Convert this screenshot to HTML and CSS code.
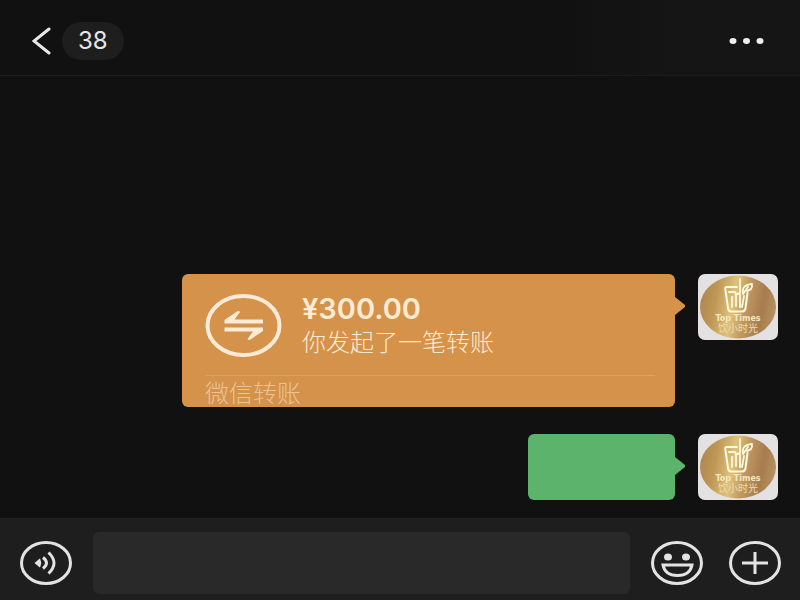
FILE: index.html
```html
<!DOCTYPE html>
<html lang="zh-CN">
<head>
<meta charset="utf-8">
<meta name="viewport" content="width=device-width, initial-scale=1">
<title>微信</title>
<link rel="stylesheet" href="styles.css">
</head>
<body>
<svg class="defs" aria-hidden="true">
  <defs>
    <linearGradient id="gold" x1="0" y1="0.4" x2="1" y2="0.55">
      <stop offset="0" stop-color="#b08650"/>
      <stop offset="0.2" stop-color="#bf9858"/>
      <stop offset="0.43" stop-color="#dfc27a"/>
      <stop offset="0.6" stop-color="#c09860"/>
      <stop offset="0.82" stop-color="#a67c50"/>
      <stop offset="1" stop-color="#b8925f"/>
    </linearGradient>
    <symbol id="avatar" viewBox="0 0 80 66">
      <rect width="80" height="66" fill="#e3e1e2"/>
      <ellipse cx="40" cy="33" rx="38" ry="31.5" fill="url(#gold)"/>
      <g fill="none" stroke="#fffbe0" stroke-linecap="round" stroke-linejoin="round">
        <path stroke-width="2" d="M39 13H29Q27 13 27.300 15L30 34Q30.500 37.500 33 37.500H44Q47 37.500 47.500 34L49.500 19"/>
        <path stroke-width="1.800" d="M31 18H36Q38 18 38 21V32M34 23V33M42 21V33M46 22L44 33M38 21Q40 18 42 21"/>
        <path stroke-width="1.800" d="M42 5V19M45 20Q43 11 54 10Q55 17 47 17L45 20L50 13"/>
      </g>
      <text class="brand" x="40" y="47" text-anchor="middle">Top Times</text>
      <text class="brand-cn" x="40" y="58" text-anchor="middle">饮小时光</text>
    </symbol>
  </defs>
</svg>

<header class="topbar">
  <button class="back" type="button" aria-label="返回">
    <svg width="20" height="30" viewBox="0 0 20 30"><path d="M17 3L2 15L17 27"/></svg>
    <span class="count">38</span>
  </button>
  <button class="more" type="button" aria-label="更多">
    <svg width="36" height="8" viewBox="0 0 36 8"><ellipse cx="4" cy="4" rx="3.500" ry="3"/><ellipse cx="17.500" cy="4" rx="3.500" ry="3"/><ellipse cx="31" cy="4" rx="3.500" ry="3"/></svg>
  </button>
</header>

<main class="chat">
  <article class="message">
    <section class="bubble transfer">
      <div class="transfer-main">
        <svg class="transfer-icon" width="78" height="64" viewBox="0 0 78 64">
          <ellipse cx="38.500" cy="32.500" rx="36" ry="29.500"/>
          <path class="arrows" d="M19.500 30.500V27L32 18.500Q34 17.500 35 19L29.500 26.500H58V30.500ZM58 34.500V38L45.500 46.500Q43.500 47.500 42.500 46L48 38.500H19.500V34.500Z"/>
        </svg>
        <div class="transfer-text">
          <strong class="amount">¥300.00</strong>
          <span class="note">你发起了一笔转账</span>
        </div>
      </div>
      <div class="source">微信转账</div>
    </section>
    <svg class="avatar" role="img" aria-label="头像"><use href="#avatar"/></svg>
  </article>
  <article class="message">
    <div class="bubble text"></div>
    <svg class="avatar" role="img" aria-label="头像"><use href="#avatar"/></svg>
  </article>
</main>

<footer class="composer">
  <button type="button" aria-label="语音">
    <svg width="52" height="44" viewBox="0 0 52 44"><ellipse cx="26" cy="22" rx="24.500" ry="20.500"/><path class="solid" d="M16 22L19.500 19Q21 22 19.500 25Z"/><path d="M23 16.500Q30 22 23 27.500M28.500 11.500Q39.500 22 28.500 32.500"/></svg>
  </button>
  <input class="entry" type="text" aria-label="消息">
  <button type="button" aria-label="表情">
    <svg width="52" height="44" viewBox="0 0 52 44"><ellipse cx="26" cy="22" rx="24.500" ry="20.500"/><ellipse class="solid" cx="17" cy="16" rx="3" ry="2.500"/><ellipse class="solid" cx="35" cy="16" rx="3" ry="2.500"/><path d="M12 24H41Q39 34.500 26.500 34.500Q14 34.500 12 24Z"/></svg>
  </button>
  <button class="plus" type="button" aria-label="更多功能">
    <svg width="52" height="44" viewBox="0 0 52 44"><ellipse cx="26" cy="22" rx="24.500" ry="20.500"/><path d="M13 22H39M26 11V33"/></svg>
  </button>
</footer>
</body>
</html>
```
FILE: styles.css
```css
* { box-sizing: border-box; }

body {
  margin: 0;
  min-height: 100vh;
  display: flex;
  flex-direction: column;
  background: #111;
  color: #e6e6e6;
  font-family: "Noto Sans CJK SC", sans-serif;
}

button {
  padding: 0;
  border: 0;
  background: none;
  color: inherit;
  display: flex;
  align-items: center;
}

svg { display: block; }

.defs { position: absolute; width: 0; height: 0; }

.topbar {
  display: flex;
  justify-content: space-between;
  align-items: center;
  padding: 22px 35px 15px 32px;
  background: linear-gradient(90deg, #111 70%, #151515 85%);
  border-bottom: 1px solid #1c1c1c;
}

.back { gap: 10px; }

.back path {
  fill: none;
  stroke: #e8e8e8;
  stroke-width: 3;
  stroke-linecap: round;
}

.count {
  padding: 0 16px;
  border-radius: 19px;
  background: #1e1e1e;
  font: 24px/38px Inter, sans-serif;
}

.more svg { fill: #eee; }

.chat {
  flex: 1;
  display: flex;
  flex-direction: column;
  justify-content: flex-end;
  gap: 27px;
  padding: 18px 22px;
}

.message {
  display: flex;
  justify-content: flex-end;
  align-items: flex-start;
  gap: 23px;
}

.avatar {
  flex: none;
  width: 80px;
  height: 66px;
  border-radius: 7px;
}

.brand {
  font: 700 8px "DejaVu Sans", sans-serif;
  fill: #f5e6c0;
}

.brand-cn {
  font: 10px "Noto Sans CJK SC", sans-serif;
  fill: #f0dcae;
}

.bubble {
  position: relative;
  border-radius: 6px;
}

.bubble::after {
  content: "";
  position: absolute;
  left: 100%;
  top: 23px;
  width: 10px;
  height: 18px;
  background: inherit;
  clip-path: polygon(0 0, 100% 45%, 100% 55%, 0 100%);
}

.transfer {
  flex: 0 1 493px;
  padding: 19px 20px 0 23px;
  background: #d4924b;
  color: #fdebd3;
}

.transfer-main {
  display: flex;
  gap: 19px;
  padding-bottom: 18px;
}

.transfer-icon {
  flex: none;
  fill: none;
  stroke: #fdebd8;
  stroke-width: 4;
}

.arrows {
  fill: #fdebd8;
  stroke: none;
}

.transfer-text {
  display: flex;
  flex-direction: column;
}

.amount {
  font: 600 29px/32px Inter, sans-serif;
}

.note {
  font-size: 24px;
  font-weight: 300;
  line-height: 32px;
}

.source {
  border-top: 1px solid #dba064;
  color: #ecc396;
  font-size: 24px;
  font-weight: 300;
  line-height: 31px;
}

.text {
  flex: 0 1 147px;
  height: 66px;
  background: #5bb36c;
}

.composer {
  display: flex;
  align-items: center;
  gap: 21px;
  padding: 13px 19px 6px 20px;
  background: #1e1e1e;
  border-top: 1px solid #222;
}

.composer svg {
  fill: none;
  stroke: #e3e3e3;
  stroke-width: 3;
}

.composer .solid {
  fill: #e3e3e3;
  stroke-width: 2;
}

.plus { margin-left: 5px; }

.entry {
  flex: 1;
  min-width: 0;
  height: 62px;
  padding: 0 16px;
  border: 0;
  border-radius: 6px;
  background: #292929;
  color: #e6e6e6;
  font: 24px "Noto Sans CJK SC", sans-serif;
}
```
